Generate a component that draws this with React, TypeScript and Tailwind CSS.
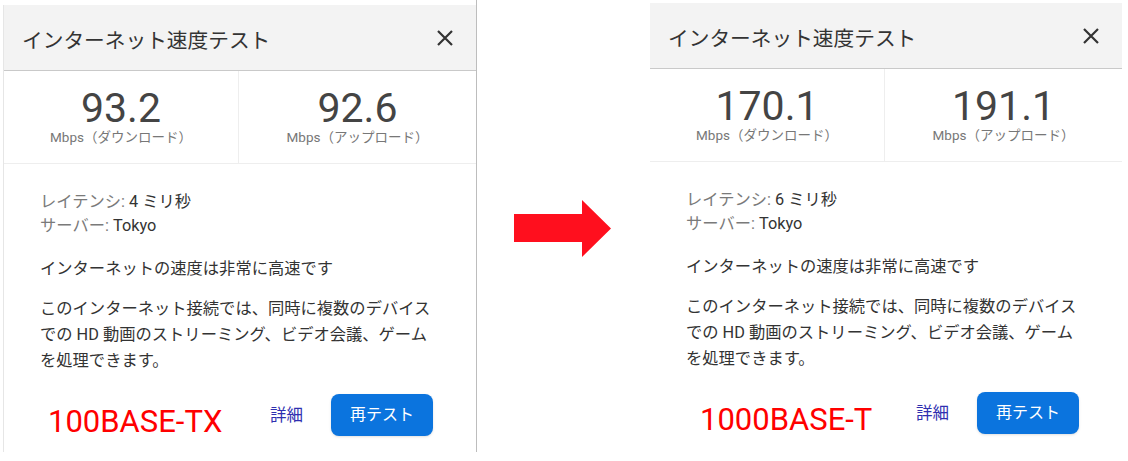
import React from "react";

type PanelProps = {
  down: string;
  up: string;
  latency: string;
  label: string;
  labelOffset: string;
  top: string;
  edge: string;
};

const CloseIcon = () => (
  <svg width="18" height="18" viewBox="0 0 18 18" className="text-[#333]">
    <path d="M2 2 L16 16 M16 2 L2 16" stroke="currentColor" strokeWidth="2.2" />
  </svg>
);

const Panel = ({ down, up, latency, label, labelOffset, top, edge }: PanelProps) => {
  return (
    <div className={`${top} w-[473px] h-[447px] shrink-0 bg-white border-l ${edge}`}>
      {/* header */}
      <div className="h-[66px] bg-[#f3f3f3] border-b border-[#c9c9c9] flex items-center justify-between pl-[18px] pr-[22px]">
        <span className="text-[20.7px] text-[#333] mt-[8px]">インターネット速度テスト</span>
        <CloseIcon />
      </div>

      {/* speed numbers */}
      <div className="h-[93px] border-b border-[#eeeeee] grid grid-cols-[235px_1fr]">
        <div className="border-r border-[#eeeeee] flex flex-col items-center pt-[15px]">
          <span className="text-[41px] leading-[44px] text-[#444]">{down}</span>
          <span className="text-[13.5px] leading-[15px] text-[#777]">Mbps（ダウンロード）</span>
        </div>
        <div className="flex flex-col items-center pt-[15px]">
          <span className="text-[41px] leading-[44px] text-[#444]">{up}</span>
          <span className="text-[13.5px] leading-[15px] text-[#777]">Mbps（アップロード）</span>
        </div>
      </div>

      {/* details */}
      <div className="pl-[36px] pt-[26px] text-[16.3px] text-[#333]">
        <div className="leading-[24px]">
          <span className="text-[#7a7a7a]">レイテンシ: </span>
          {latency}
        </div>
        <div className="leading-[24px]">
          <span className="text-[#7a7a7a]">サーバー: </span>Tokyo
        </div>
        <p className="mt-[18px] leading-[26px]">インターネットの速度は非常に高速です</p>
        <p className="mt-[14px] leading-[26px] w-[400px]">
          このインターネット接続では、同時に複数のデバイスでの HD 動画のストリーミング、ビデオ会議、ゲームを処理できます。
        </p>

        <div className="mt-[20px] flex items-start">
          <div className="w-[230px] pt-[10px]">
            <span className={`${labelOffset} inline-block text-[31px] leading-[36px] text-[#ff0000]`}>
              {label}
            </span>
          </div>
          <span className="pt-[10px] text-[16.5px] leading-[24px] text-[#2f2fb0]">詳細</span>
          <button className="ml-[28px] w-[102px] h-[42px] rounded-[8px] bg-[#0b74de] text-white text-[16px] shadow-sm">
            再テスト
          </button>
        </div>
      </div>
    </div>
  );
};

const Arrow = () => (
  <svg width="97" height="57" viewBox="0 0 97 57" className="mt-[200px] ml-[37px] mr-[38px] shrink-0">
    <polygon points="0,14 68,14 68,0 97,28.5 68,57 68,42 0,42" fill="#ff0f1e" />
  </svg>
);

export default function App() {
  return (
    <div
      className="w-[1128px] h-[461px] bg-white flex items-start overflow-hidden"
      style={{ fontFamily: "Roboto, 'Noto Sans CJK JP', sans-serif" }}
    >
      <div className="ml-[3px] border-r border-[#bdbdbd] shrink-0">
        <Panel
          down="93.2"
          up="92.6"
          latency="4 ミリ秒"
          label="100BASE-TX"
          labelOffset="ml-[8px]"
          top="mt-[5px]"
          edge="border-[#e6e6e6]"
        />
      </div>
      <Arrow />
      <Panel
        down="170.1"
        up="191.1"
        latency="6 ミリ秒"
        label="1000BASE-T"
        labelOffset="ml-[14px]"
        top="mt-[3px]"
        edge="border-white"
      />
    </div>
  );
}
